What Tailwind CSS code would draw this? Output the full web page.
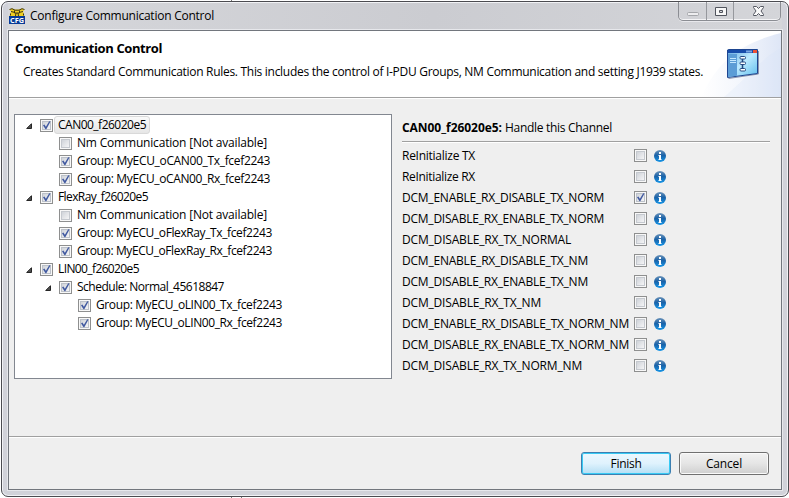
<!DOCTYPE html>
<html lang="en">
<head>
<meta charset="utf-8">
<title>Configure Communication Control</title>
<script src="https://cdn.jsdelivr.net/npm/@tailwindcss/browser@4"></script>
</head>
<body class="w-[789px] h-[498px] overflow-hidden bg-white font-['Open_Sans','Noto_Sans',sans-serif] text-[12px] leading-[18px] text-black">
<svg class="hidden">
  <symbol id="on" viewBox="0 0 13 13"><rect x=".5" y=".5" width="12" height="12" fill="#f8f8f8" stroke="#8e8f8f"/><rect x="2.5" y="2.5" width="8" height="8" fill="url(#box)" stroke="#bcc1c9"/><path d="M3 6.2 4.4 5.4 5.9 7.7 9.2 2.3 10.5 2.5 6.3 10.3H5.5Z" fill="#4059a0"/></symbol>
  <symbol id="off" viewBox="0 0 13 13"><rect x=".5" y=".5" width="12" height="12" fill="#f8f8f8" stroke="#8e8f8f"/><rect x="2.5" y="2.5" width="8" height="8" fill="url(#box)" stroke="#c5c9cf"/></symbol>
  <symbol id="arrow" viewBox="0 0 6 6"><path d="M5.5.7V5.5H.7Z" fill="#505050" stroke="#252525"/></symbol>
  <symbol id="info" viewBox="0 0 12 12"><circle cx="6" cy="6" r="6" fill="url(#blue)"/><path d="M5 2h2v2H5zM4.5 5H7v4h.5v1h-3V9H5V6h-.5z" fill="#fff"/></symbol>
</svg>
<svg class="absolute w-0 h-0"><defs>
  <linearGradient id="box" x1="0" y1="0" x2="1" y2="1"><stop stop-color="#cdd1d7"/><stop offset="1" stop-color="#f7f7f8"/></linearGradient>
  <linearGradient id="blue" x1="0" y1="0" x2="0" y2="1"><stop stop-color="#6b92b8"/><stop offset=".45" stop-color="#1a62a8"/><stop offset="1" stop-color="#1596e8"/></linearGradient>
</defs></svg>
<div class="absolute left-[231px] top-0 w-px h-[498px] bg-[#777]"></div>
<div class="absolute left-[241px] top-[490px] w-px h-[8px] bg-[#777]"></div>

<div class="relative ml-px w-[788px] h-[497px] pt-px">
<div class="h-[496px] w-[788px] rounded-[7px] border border-[#4b4b50] bg-[#d1d2d9] shadow-[inset_0_0_0_1px_#f1f2f5] px-[6px]">
  <header class="flex h-[28px] w-[774px] pt-px bg-linear-to-r from-[#d6d7db] from-0% via-[#cbccd1] via-55% to-[#d4d5d9] to-100% bg-clip-content">
    <svg class="ml-px mt-[5px] w-4 h-4 shrink-0" viewBox="0 0 16 16">
      <path d="M.5 1.500 3.500.5 6 1.500h4l2.500-1 3 1L14 3.500l1.500 4.500H.5L2 3.500Z" fill="#f0cf22"/><path d="M.5 1.500 3 .7l3 1.500h4l3-1.500 2.500.8M2 3.500l4 1M14 3.500l-4 1M5.500 2.500v2.500h5V2.500M7 5l-.5 3M9 5l.5 3M1.500 5.500v2M14.500 5.500v2" stroke="#3e3612" fill="none"/>
      <rect y="8" width="16" height="8" fill="#073b98"/><text x="1" y="14.600" font-size="7" font-weight="700" fill="#fff" textLength="14" lengthAdjust="spacingAndGlyphs">CFG</text>
    </svg>
    <span class="ml-[5px] mt-[4px] whitespace-nowrap" data-w="184">Configure Communication Control</span>
    <div class="ml-auto mr-px flex h-[19px] w-[103px] -mt-px rounded-b-[5px] border border-t-0 border-[#8b8d93] shadow-[0_1px_0_#e8e8ec,inset_0_-1px_0_#f4f4f6]">
      <div class="flex w-[28px] border-r border-[#96989d]"><svg class="w-[27px] h-[18px]" viewBox="0 -1 27 18"><rect x="8.500" y="9.500" width="11" height="3" rx="1" fill="#ededef" stroke="#a4a6aa"/></svg></div>
      <div class="flex w-[27px] border-r border-[#96989d]"><svg class="w-[26px] h-[18px]" viewBox="-1 -1 26 18"><path d="M7.500 4.500h11v8h-11zM11.500 7.500h3v2h-3z" fill="#f7f7f7" fill-rule="evenodd" stroke="#51545d"/></svg></div>
      <svg class="w-[46px] h-[18px]" viewBox="-1 -1 46 18"><path d="m18.500 3.500h3l2 2 2-2h3v1L26 8l2.500 3.500v1h-3l-2-2-2 2h-3v-1L21 8l-2.500-3.500Z" fill="#fafafa" stroke="#555862"/></svg>
    </div>
  </header>

  <main class="flex flex-col w-[774px] h-[460px] border border-[#72767d] bg-[#efefef] shadow-[0_0_0_1px_#e7e8ec]">
    <section class="flex h-[67px] shrink-0 border-b border-[#a0a0a0] bg-white">
      <div class="pl-[6px] pt-[8px] w-[692px] whitespace-nowrap">
        <h1 class="text-[13px] font-bold"><span data-w="147">Communication Control</span></h1>
        <p class="ml-[8px] mt-[6px]"><span data-w="680">Creates Standard Communication Rules. This includes the control of I-PDU Groups, NM Communication and setting J1939 states.</span></p>
      </div>
      <svg class="w-[80px] h-[66px] shrink-0" viewBox="701 31 80 66">
        <defs><linearGradient id="swoosh" x2="1"><stop stop-color="#fff"/><stop offset=".5" stop-color="#f3f6fc"/><stop offset="1" stop-color="#dee6f6"/></linearGradient><linearGradient id="pane" x2="1" y2="1"><stop stop-color="#66a8df"/><stop offset=".5" stop-color="#bceaff"/><stop offset="1" stop-color="#5cbcec"/></linearGradient></defs>
        <path d="M701 97C720 57 743 43 781 33V97Z" fill="url(#swoosh)"/><path d="M724 97C745 80 763 57 781 48V97Z" fill="#d8e3f7" opacity=".25"/>
        <path d="M728.500 78.500 758.500 74V51" fill="none" stroke="#8d96ad"/>
        <path d="M727.500 50 729 49.500H757.500V73.500L727.500 77.500Z" fill="url(#pane)" stroke="#1d4590"/>
        <path d="M728 50h29v3h-29z" fill="#174caa"/><path d="M746 50.500h6v2h-6z" fill="#79a6e2"/><path d="M753 50h4v3h-4z" fill="#ed5034"/>
        <path d="M728 54h9v21.800l-9 1.200z" fill="#5c9dd6"/><path d="M730 58.500h6M730 60.500h6M730 62.500h6" stroke="#c4e8ff"/>
        <path d="M742.500 57v14" stroke="#24477b" stroke-width="1.500"/>
        <g fill="#fff" stroke="#264c84"><rect x="740" y="56.500" width="5.500" height="2.500" rx="1"/><rect x="740" y="62" width="5.500" height="2.500" rx="1"/><rect x="740" y="68.500" width="5.500" height="2.500" rx="1"/></g>
      </svg>
    </section>

    <section class="flex h-[338px] shrink-0 border-t border-white pt-[15px] pl-[5px]">
      <div id="tree" class="w-[378px] h-[265px] shrink-0 border border-[#828790] bg-white pt-px pl-[11px]"></div>
      <div class="ml-[10px] w-[368px]">
        <div class="flex h-[28px] pt-[5px] whitespace-nowrap border-b border-[#a0a0a0] shadow-[0_1px_0_white]"><b data-w="100">CAN00_f26020e5:</b><span class="ml-[3px]" data-w="107">Handle this Channel</span></div>
        <div id="rules" class="pt-[3px]"></div>
      </div>
    </section>

    <footer class="flex flex-1 border-t border-[#a0a0a0] shadow-[inset_0_1px_0_white] pt-[15px] pl-[572px] gap-[8px]">
      <button class="w-[90px] h-[23px] rounded-[3px] border border-[#3c7fb1] shadow-[inset_0_0_0_1px_#38caf4] bg-linear-to-b from-[#edf8fe] from-0% via-[#dff2fd] via-50% to-[#b3def4] to-100%"><span data-w="31">Finish</span></button>
      <button class="w-[90px] h-[23px] rounded-[3px] border border-[#707070] shadow-[inset_0_0_0_1px_#fafafa] bg-linear-to-b from-[#f2f2f2] from-0% via-[#e5e5e5] via-50% to-[#cfcfcf] to-100%"><span data-w="36">Cancel</span></button>
    </footer>
  </main>
</div>
</div>
<script>
// Tree rows: level, expandable, checked, label, label width
const tree = [
 [0,1,1,'CAN00_f26020e5',88],[1,0,0,'Nm Communication [Not available]',190],[1,0,1,'Group: MyECU_oCAN00_Tx_fcef2243',193],[1,0,1,'Group: MyECU_oCAN00_Rx_fcef2243',193],
 [0,1,1,'FlexRay_f26020e5',90],[1,0,0,'Nm Communication [Not available]',190],[1,0,1,'Group: MyECU_oFlexRay_Tx_fcef2243',195],[1,0,1,'Group: MyECU_oFlexRay_Rx_fcef2243',195],
 [0,1,1,'LIN00_f26020e5',81],[1,1,1,'Schedule: Normal_45618847',147],[2,0,1,'Group: MyECU_oLIN00_Tx_fcef2243',186],[2,0,1,'Group: MyECU_oLIN00_Rx_fcef2243',186]];
document.getElementById('tree').innerHTML = tree.map(([l,e,c,t,w],i)=>`<div class="flex items-center h-[18px] whitespace-nowrap" style="padding-left:${l*19}px"><svg class="w-[6px] h-[6px] mt-[2px] shrink-0">${e?'<use href="#arrow"/>':''}</svg><svg class="ml-[8px] mt-px w-[13px] h-[13px] shrink-0"><use href="#${c?'on':'off'}"/></svg><div class="${i===0?'ml-px h-[18px] w-[96px] pl-[3px] rounded-[3px] border border-[#d9d9d9] bg-linear-to-b from-[#fafafa] to-[#e6e6e6] leading-[16px]':'ml-[5px] leading-[18px]'}"><span data-w="${w}">${t}</span></div></div>`).join('');
// Rules: label, label width, checked
const rules = [['ReInitialize TX',73],['ReInitialize RX',73],['DCM_ENABLE_RX_DISABLE_TX_NORM',202,1],['DCM_DISABLE_RX_ENABLE_TX_NORM',202],['DCM_DISABLE_RX_TX_NORMAL',169],['DCM_ENABLE_RX_DISABLE_TX_NM',186],['DCM_DISABLE_RX_ENABLE_TX_NM',186],['DCM_DISABLE_RX_TX_NM',139],['DCM_ENABLE_RX_DISABLE_TX_NORM_NM',227],['DCM_DISABLE_RX_ENABLE_TX_NORM_NM',227],['DCM_DISABLE_RX_TX_NORM_NM',180]];
document.getElementById('rules').innerHTML = rules.map(([t,w,c])=>`<div class="flex items-center h-[21px] whitespace-nowrap"><div class="w-[232px]"><span data-w="${w}">${t}</span></div><svg class="w-[13px] h-[13px]"><use href="#${c?'on':'off'}"/></svg><svg class="ml-[7px] w-[12px] h-[12px]"><use href="#info"/></svg></div>`).join('');
function fit() {
  const labels = [...document.querySelectorAll('[data-w]')];
  labels.forEach(s => { s.style.letterSpacing = '0px'; });
  const widths = labels.map(s => { const r = document.createRange(); r.selectNodeContents(s); return r.getBoundingClientRect().width; });
  labels.forEach((s, i) => { s.style.letterSpacing = (s.dataset.w - widths[i]) / s.textContent.length + 'px'; });
}
fit();
addEventListener('load', () => { fit(); requestAnimationFrame(fit); document.fonts.ready.then(fit); });
</script>
</body>
</html>
